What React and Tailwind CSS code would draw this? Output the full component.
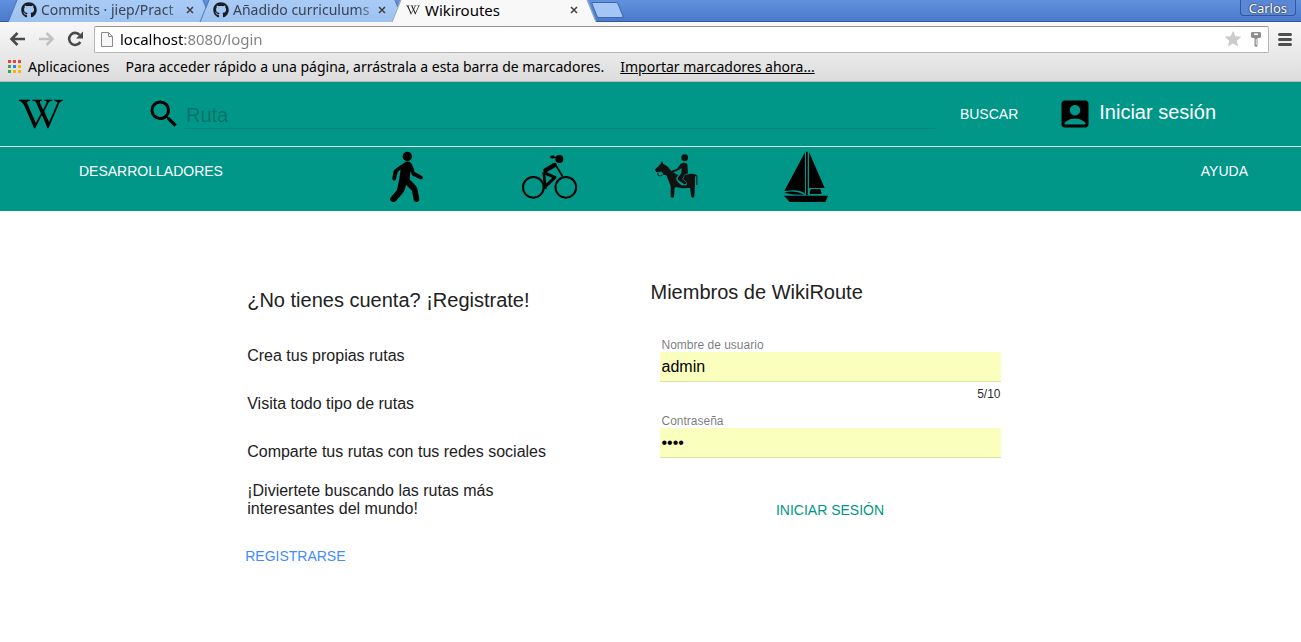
import { FaGithub, FaWikipediaW } from "react-icons/fa";
import { MdSearch, MdAccountBox, MdStar } from "react-icons/md";

function Tab({ icon, title, active }) {
  const fill = active
    ? "bg-[#f8f8f8] border-[#8a9cbd]"
    : "bg-linear-to-b from-[#a9cbf6] to-[#9dc2f1] border-[#5577b0]";
  return (
    <div className={`relative -mr-1 h-[22px] w-[196px] ${active ? "z-10" : ""}`}>
      <span className={`absolute inset-y-0 left-0 w-1/2 -skew-x-[22deg] border-l ${fill}`} />
      <span className={`absolute inset-y-0 right-0 w-1/2 skew-x-[22deg] border-r ${fill}`} />
      <span className={`absolute inset-y-0 left-3 right-3 ${active ? "bg-[#f8f8f8]" : "bg-linear-to-b from-[#a9cbf6] to-[#9dc2f1]"}`} />
      <div className="relative flex h-5 items-center pl-[9px] pr-3.5">
        {icon}
        <span
          className={`ml-1 flex-1 whitespace-nowrap leading-5 ${
            active ? "text-[15px] text-black" : "text-sm text-[#3a4350] [mask-image:linear-gradient(to_right,#000_85%,transparent_105%)]"
          }`}
        >
          {title}
        </span>
        <button aria-label="Cerrar" className="flex h-4 w-2 flex-none items-center justify-center">
          <svg viewBox="0 0 8 8" className="size-2 stroke-[#444] stroke-[1.6]">
            <path d="M1 1L7 7M7 1L1 7" />
          </svg>
        </button>
      </div>
    </div>
  );
}

function BrowserChrome() {
  const dots = ["#ea4335", "#ea4335", "#ea4335", "#34a853", "#2a86f0", "#f9b500", "#34a853", "#f9b500", "#f9b500"];
  return (
    <div className="font-['Noto_Sans','Open_Sans',sans-serif]">
      <div className="flex h-[22px] border-b border-[#35579b] bg-linear-to-b from-[#6190dd] to-[#4b7acd]">
        <div className="flex flex-1 pl-3">
          <Tab icon={<FaGithub className="size-4 flex-none text-[#1b1f23]" />} title="Commits · jiep/Pract" />
          <Tab icon={<FaGithub className="size-4 flex-none text-[#1b1f23]" />} title="Añadido curriculums" />
          <Tab icon={<FaWikipediaW className="mx-px size-3.5 flex-none" />} title="Wikiroutes" active />
          <button
            aria-label="Nueva pestaña"
            className="ml-1.5 mt-0.5 h-4 w-[27px] skew-x-[22deg] rounded-xs border border-[#3f66ae] bg-[#a3c6f5]"
          />
        </div>
        <button className="mr-[5px] h-4 rounded-b border border-t-0 border-[#33569d] bg-[#5b88d6] px-2 text-[13px] leading-4 text-white [text-shadow:0_0_2px_#000]">
          Carlos
        </button>
      </div>

      <div className="bg-linear-to-b from-[#f8f8f8] to-[#dcdcdc]">
        <div className="flex h-[34px] items-center">
          <div className="flex flex-none gap-3 pl-[9px] pr-2.5">
            <button aria-label="Atrás">
              <svg viewBox="0 0 17 16" className="h-4 w-[17px] fill-none stroke-[#4a4a4a] stroke-[2.6]">
                <path d="M16 8H3M8.500 2L2.500 8L8.500 14" />
              </svg>
            </button>
            <button aria-label="Adelante">
              <svg viewBox="0 0 17 16" className="h-4 w-[17px] fill-none stroke-[#c2c2c2] stroke-[2.6]">
                <path d="M1 8H14M8.500 2L14.500 8L8.500 14" />
              </svg>
            </button>
            <button aria-label="Recargar">
              <svg viewBox="0 0 17 16" className="h-4 w-[17px]">
                <path d="M13.300 11A6 6 0 1 1 12.700 4" fill="none" stroke="#4a4a4a" strokeWidth="2.600" />
                <path d="M16 0.500V7.500H9Z" fill="#4a4a4a" />
              </svg>
            </button>
          </div>
          <div className="flex h-[27px] flex-1 items-center rounded-xs border border-[#b5b5b5] border-t-[#949494] bg-white px-1.5">
            <svg viewBox="0 0 12 15" className="mr-[7px] h-[15px] w-3 fill-[#f7f7f7] stroke-[#8a8a8a]">
              <path d="M0.500 0.500H7.500L11.500 4.500V14.500H0.500ZM7.500 0.500V4.500H11.500" />
            </svg>
            <input
              aria-label="Dirección"
              defaultValue="localhost:8080/login"
              className="h-5 min-w-0 flex-1 bg-[linear-gradient(to_right,#000_65px,#808080_65px)] bg-clip-text text-[15px] leading-5 text-transparent outline-none"
            />
            <button aria-label="Añadir a marcadores">
              <MdStar className="size-5 text-[#cbcbcb]" />
            </button>
            <button aria-label="Contraseñas guardadas" className="ml-2 mr-px">
              <svg viewBox="0 0 10 15" className="h-[15px] w-2.5">
                <path d="M1 0H9L10 1V5L9 6H6.500V14L5 15L3.500 14V6H1L0 5V1Z" fill="#8e8e8e" />
                <path d="M3 1.500H7V3H3ZM4.800 7H5.600V13H4.800Z" fill="#fff" />
              </svg>
            </button>
          </div>
          <button aria-label="Menú" className="mx-[9px] flex w-3.5 flex-col gap-0.5">
            <span className="h-[3px] rounded-xs bg-[#4f4f4f]" />
            <span className="h-[3px] rounded-xs bg-[#4f4f4f]" />
            <span className="h-[3px] rounded-xs bg-[#4f4f4f]" />
          </button>
        </div>
        <div className="flex h-[26px] items-center border-b border-[#b8b8b8] pb-1 pl-2 text-[14px] leading-5 text-black">
          <button className="flex items-center gap-[7px]">
            <svg viewBox="0 0 13 13" className="size-[13px]">
              {dots.map((c, i) => (
                <rect key={i} x={(i % 3) * 5} y={Math.floor(i / 3) * 5} width="3" height="3" fill={c} />
              ))}
            </svg>
            Aplicaciones
          </button>
          <span className="ml-4">Para acceder rápido a una página, arrástrala a esta barra de marcadores.</span>
          <a href="#importar" className="ml-4 underline">
            Importar marcadores ahora...
          </a>
        </div>
      </div>
    </div>
  );
}

function WalkIcon() {
  return (
    <svg viewBox="60 18 102 156" className="h-[52px] w-[34px]">
      <circle cx="112" cy="34.500" r="14" />
      <path d="M103 53Q113 46 123 54Q129 62 134 81L156 93Q161 98 157 102Q153 104 149 102L126 91L121 79L119 103L138 123Q142 129 143 136L148 163Q147 171 139 171Q133 171 131 165L126 137L108 119Q104 138 98 145L78 168Q71 173 64 169Q58 165 61 159L81 135L88 101L92 73L83 81L78 103Q75 108 70 106Q66 104 67 99L71 78Q72 74 77 71Z" />
    </svg>
  );
}

function BikeIcon() {
  return (
    <svg viewBox="36 18 168 156" className="h-[52px] w-14">
      <g fill="none" stroke="#000" strokeWidth="6">
        <circle cx="70" cy="127" r="31" />
        <circle cx="167.500" cy="127" r="31" />
        <path d="M137 60L157 93" strokeWidth="5" strokeLinecap="round" />
        <path d="M104 84L135 97L106 124V128" strokeWidth="9" strokeLinejoin="round" strokeLinecap="round" />
        <path d="M101 82L106 128" strokeWidth="8" />
        <path d="M106 76L134 60" strokeWidth="13" strokeLinecap="round" />
      </g>
      <circle cx="148" cy="42" r="12" />
      <path d="M142 38L132 40Q124 42 120 37Q120 31 128 31Q134 32 135 36L144 34Z" />
    </svg>
  );
}

function HorseIcon() {
  return (
    <svg viewBox="39 18 132 156" className="h-[52px] w-11 fill-[#111]">
      <circle cx="131" cy="38" r="10" />
      <path d="M41 74L58 58L63 48L67 57L79 64L93 80L112 91L107 97Q104 105 110 110L121 121H137V115L122 106L128 91L146 87Q161 85 169 92V120H166V94H162V119L160 155Q156 161 151 155L147 129L123 130L105 126L101 129L99 155Q94 161 89 155V124Q85 112 76 91L66 89Q67 83 62 80L46 81Z" />
      <path d="M65 90Q57 95 51 91Q50 87 51 82" fill="none" stroke="#111" strokeWidth="2.500" />
      <path d="M119 57Q130 50 139 57L141 85L129 90L124 104L135 112Q137 118 130 118L112 106Q107 100 114 94L121 85L122 70L112 76L94 83L91 78L108 71Z" />
      <path d="M111 92Q103 103 111 109L123 119H135Q140 113 133 108L125 103L130 91" fill="none" stroke="#009688" strokeWidth="2" />
    </svg>
  );
}

function BoatIcon() {
  return (
    <svg viewBox="42 18 132 156" className="h-[52px] w-11">
      <path d="M105 22V146Q92 135 66 136L43 138Z" />
      <path d="M108 20H113V151H108ZM117 21L164 129H117Z" />
      <path d="M120 139L123 132H151L155 147H119Z" />
      <path d="M42 143Q73 134 103 149Q72 151 42 143Z" />
      <path d="M42 152H174L166 171H59Z" />
    </svg>
  );
}

function Header() {
  return (
    <header className="bg-[#009688] text-white">
      <div className="flex h-[65px] items-center border-b border-[#e0e0e0] pl-[19px]">
        <a href="#inicio" aria-label="Wikiroutes" className="flex-none text-black">
          <FaWikipediaW className="h-9 w-11" />
        </a>
        <form className="ml-[83px] flex min-w-0 flex-1 items-center">
          <label htmlFor="ruta" className="flex-none text-black">
            <MdSearch className="size-9" aria-label="Ruta" />
          </label>
          <input
            id="ruta"
            placeholder="Ruta"
            className="ml-0.5 h-[30px] min-w-0 flex-1 border-b border-black/12 px-0.5 pt-1 text-[20px] leading-6 text-black outline-none placeholder:text-black/25"
          />
          <button type="button" className="ml-6 text-sm">
            BUSCAR
          </button>
        </form>
        <a href="#login" className="ml-[39px] mr-[85px] flex flex-none items-center gap-1.5 text-[20px] leading-6">
          <MdAccountBox className="size-9 text-black" />
          <span className="pb-1">Iniciar sesión</span>
        </a>
      </div>
      <nav className="flex h-16 pl-[79px] pr-[53px] pt-1">
        <a href="#desarrolladores" className="mt-2.5 text-sm">
          DESARROLLADORES
        </a>
        <div className="ml-[167px] grid grid-cols-[132px_132px_130px_44px]">
          <a href="#a-pie" aria-label="A pie"><WalkIcon /></a>
          <a href="#bicicleta" aria-label="Bicicleta"><BikeIcon /></a>
          <a href="#caballo" aria-label="A caballo"><HorseIcon /></a>
          <a href="#barco" aria-label="Barco"><BoatIcon /></a>
        </div>
        <a href="#ayuda" className="ml-auto mt-2.5 text-sm">
          AYUDA
        </a>
      </nav>
    </header>
  );
}

function Field({ id, label, type, value, counter }) {
  return (
    <div className="flex flex-col">
      <label htmlFor={id} className="px-0.5 text-xs leading-[14px] text-black/54">
        {label}
      </label>
      <input
        id={id}
        type={type}
        defaultValue={value}
        className="h-[30px] w-full border-b border-black/12 bg-[#faffbd] px-0.5 text-base text-black outline-none"
      />
      {counter && <span className="pt-1 text-right text-xs text-black/87">{counter}</span>}
    </div>
  );
}

export default function App() {
  return (
    <div className="min-h-screen bg-white font-['Liberation_Sans',Arial,sans-serif] text-[#212121]">
      <BrowserChrome />
      <Header />
      <main className="grid grid-cols-2 px-[19%] pt-[69px]">
        <section className="pt-2">
          <h2 className="text-[20px] leading-6">¿No tienes cuenta? ¡Registrate!</h2>
          <ul className="mt-5 leading-[18px]">
            <li className="flex h-12 items-center">Crea tus propias rutas</li>
            <li className="flex h-12 items-center">Visita todo tipo de rutas</li>
            <li className="flex h-12 items-center">Comparte tus rutas con tus redes sociales</li>
            <li className="flex h-12 max-w-[300px] items-center">
              ¡Diviertete buscando las rutas más interesantes del mundo!
            </li>
          </ul>
          <a href="#registro" className="-ml-0.5 mt-[22px] inline-block text-sm text-[#448aff]">
            REGISTRARSE
          </a>
        </section>
        <section>
          <h2 className="text-[20px] leading-6">Miembros de WikiRoute</h2>
          <form className="ml-[9px] mt-[34px] flex max-w-[341px] flex-col">
            <Field id="usuario" label="Nombre de usuario" type="text" value="admin" counter="5/10" />
            <div className="mt-3">
              <Field id="clave" label="Contraseña" type="password" value="1234" />
            </div>
            <button type="button" className="mt-[42px] self-center text-sm text-[#009688]">
              INICIAR SESIÓN
            </button>
          </form>
        </section>
      </main>
    </div>
  );
}
